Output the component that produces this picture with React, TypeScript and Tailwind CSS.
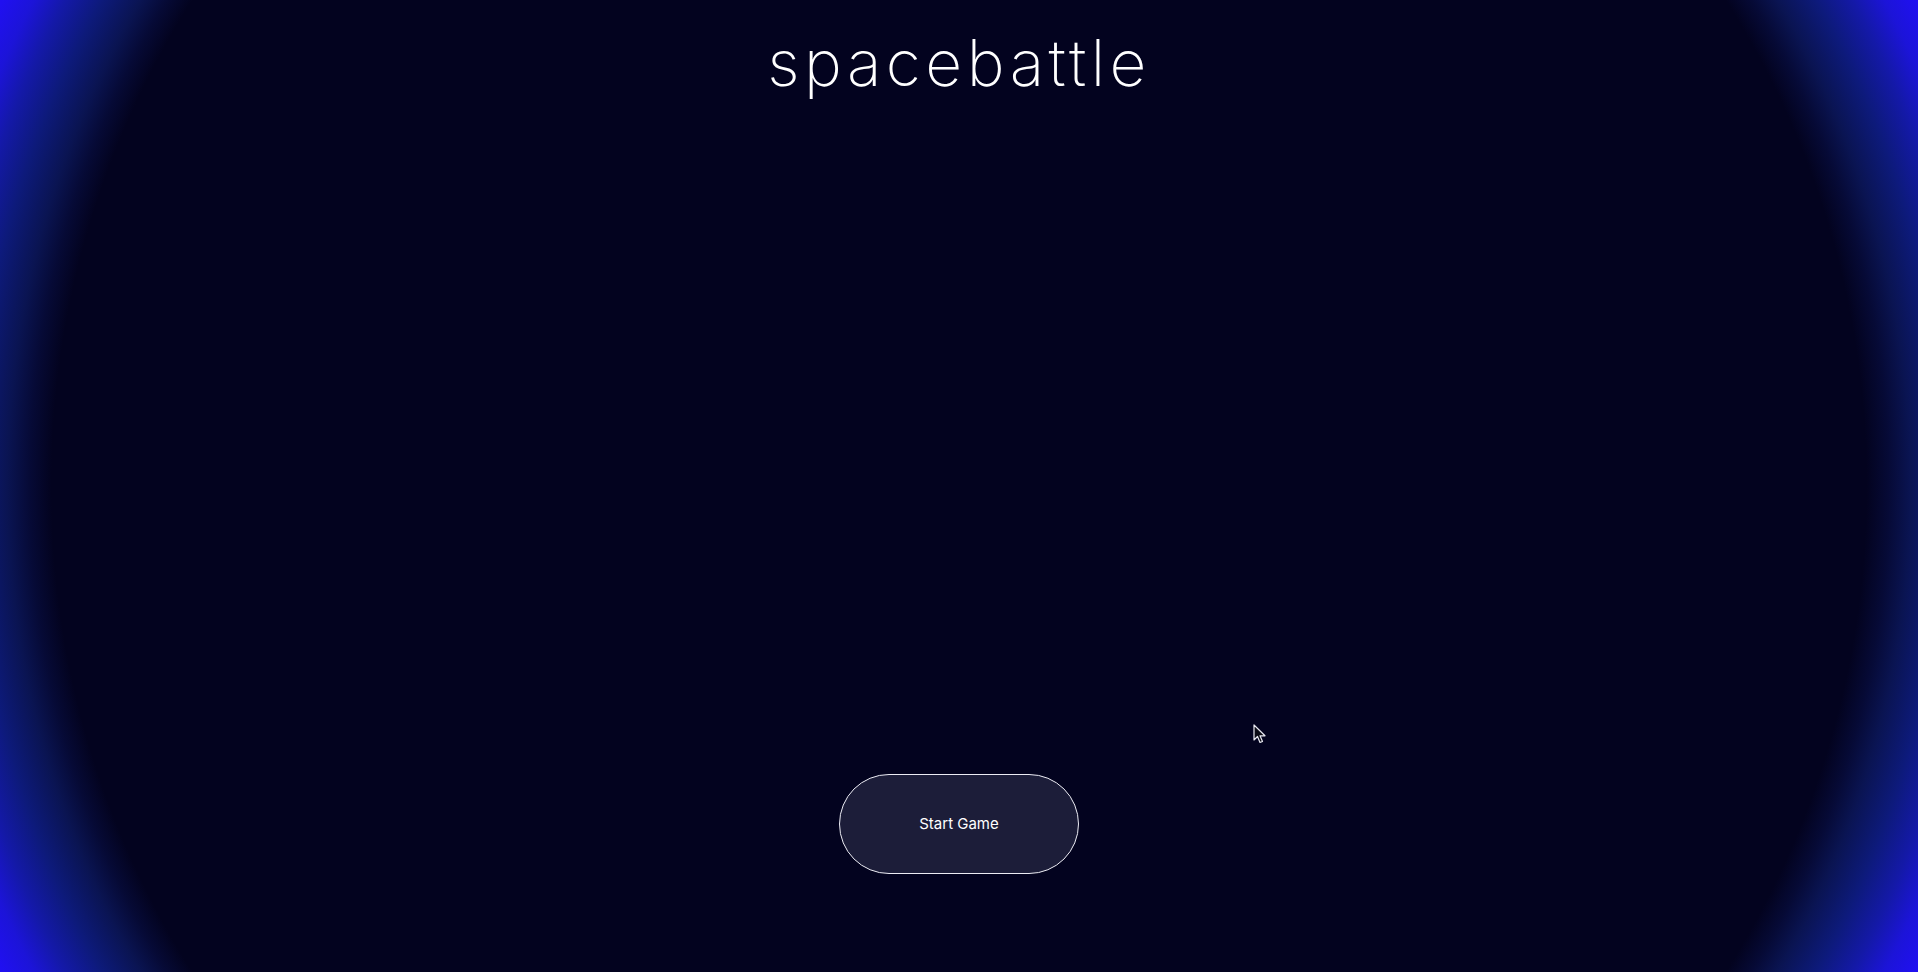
import React from "react";

export default function App() {
  return (
    <div className="relative w-full h-[972px] overflow-hidden flex flex-col items-center bg-[#03031f] bg-[radial-gradient(circle_1100px_at_center,#03031f_0%,#03031f_82.5%,#060a36_84.5%,#0a1452_86.5%,#0d1a7a_89.5%,#1419a8_92.5%,#1c14d8_95%,#2010f0_97.5%)] font-['Inter','Noto_Sans',sans-serif]">
      <h1 className="pt-[31px] text-[64px] leading-none font-extralight text-white tracking-[4.5px]">
        spacebattle
      </h1>
      <div className="flex-1" />
      <button className="mb-[98px] w-[240px] h-[100px] rounded-full border border-[#ececf4] bg-[#1c1d39] text-white text-[15px] flex items-center justify-center">
        Start Game
      </button>
      <svg
        className="absolute left-[1253px] top-[724px]"
        width="14"
        height="21"
        viewBox="0 0 14 21"
      >
        <path
          d="M1 1 L1 16 L4.5 12.5 L7 18.5 L9.5 17.5 L7 11.8 L12 11.8 Z"
          fill="#0a0a14"
          stroke="#e8e8f0"
          strokeWidth="1.2"
          strokeLinejoin="round"
        />
      </svg>
    </div>
  );
}
